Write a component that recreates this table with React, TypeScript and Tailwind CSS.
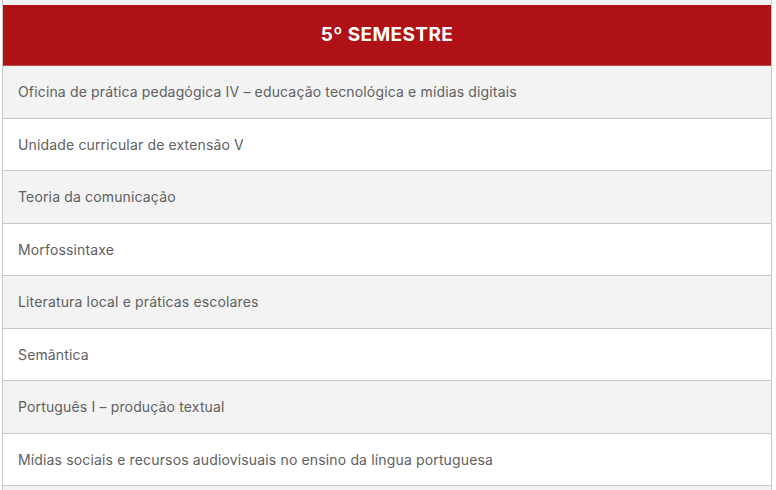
const disciplinas = [
  'Oficina de prática pedagógica IV – educação tecnológica e mídias digitais',
  'Unidade curricular de extensão V',
  'Teoria da comunicação',
  'Morfossintaxe',
  'Literatura local e práticas escolares',
  'Semântica',
  'Português I – produção textual',
  'Mídias sociais e recursos audiovisuais no ensino da língua portuguesa',
];

export default function App() {
  return (
    <div className="w-[776px] h-[490px] overflow-hidden bg-white font-[Inter,sans-serif]">
      <div className="ml-[2px] w-[770px] border-x border-[#c8c8c8]">
        {/* top strip */}
        <div className="h-[5px] bg-[#f3f3f3]" />

        {/* header */}
        <div className="h-[61px] bg-[#b01116] border-b border-[#c04a4e] flex items-center justify-center">
          <span className="text-white text-[19px] font-bold tracking-[0.4px]">5º SEMESTRE</span>
        </div>

        {/* rows */}
        {disciplinas.map((d, i) => (
          <div
            key={d}
            className={`h-[52.5px] flex items-center pl-[15px] border-b border-[#c8c8c8] text-[14px] tracking-[0.15px] text-[#606060] ${
              i % 2 === 0 ? 'bg-[#f3f3f3]' : 'bg-white'
            }`}
          >
            {d}
          </div>
        ))}
        <div className="h-[10px] bg-[#f3f3f3]" />
      </div>
    </div>
  );
}
